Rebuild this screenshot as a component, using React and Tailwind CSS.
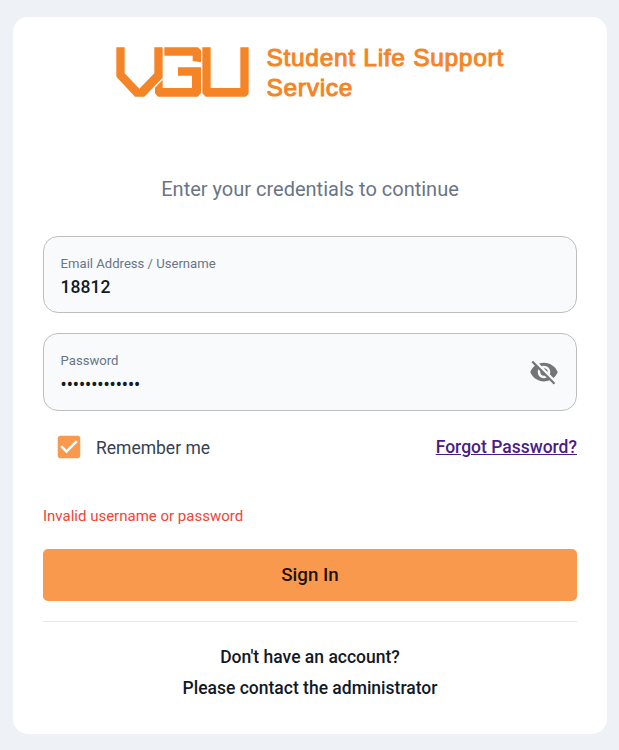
function Logo() {
  return (
    <svg viewBox="33 36 399 150" className="mt-[11px] h-[50px] w-[133px] shrink-0" fill="#f58426">
      <path d="M34 37H59V115L103 161L148 115V37H173V128L118 185H90L34 125Z" />
      <path d="M178 37H279L288 46V82L263 78V62H178Z" />
      <path d="M219 97H288V175L278 185H159L150 175V158L173 134V159H261V122H219Z" />
      <path d="M292 37H317V159H406V37H431V176L422 185H302L292 175Z" />
    </svg>
  );
}

function EyeOff() {
  return (
    <svg viewBox="0 0 24 24" className="h-[30px] w-[30px]" fill="#757575">
      <path d="M12 7c2.76 0 5 2.24 5 5 0 .65-.13 1.26-.36 1.83l2.92 2.92c1.51-1.26 2.7-2.89 3.43-4.75-1.73-4.39-6-7.5-11-7.5-1.4 0-2.74.25-3.98.7l2.16 2.16C10.74 7.13 11.35 7 12 7zM2 4.27l2.28 2.28.46.46C3.08 8.3 1.78 10.02 1 12c1.73 4.39 6 7.5 11 7.5 1.55 0 3.03-.3 4.38-.84l.42.42L19.73 22 21 20.73 3.27 3 2 4.27zM7.53 9.8l1.55 1.55c-.05.21-.08.43-.08.65 0 1.66 1.34 3 3 3 .22 0 .44-.03.65-.08l1.55 1.55c-.67.33-1.41.53-2.2.53-2.76 0-5-2.24-5-5 0-.79.2-1.53.53-2.2zm4.31-.78l3.15 3.15.02-.16c0-1.66-1.34-3-3-3l-.17.01z" />
    </svg>
  );
}

function Field({ label, value, type, children, className, inputClass }) {
  return (
    <div className={`flex items-start justify-between rounded-[15px] border border-[#bdbebf] bg-[#f8fafc] pr-[17px] pl-[16.6px] ${className}`}>
      <label className="block grow pt-[17px]">
        <span className="block text-[13.1px] leading-[20px] text-[#697586]">{label}</span>
        <input
          type={type}
          defaultValue={value}
          className={`block w-full bg-transparent text-[17.5px] font-medium text-[#121926] outline-none ${inputClass}`}
        />
      </label>
      {children}
    </div>
  );
}

export default function App() {
  return (
    <div className="h-[750px] w-full bg-[#eef2f6] px-[13px] pt-[17px] font-[Roboto,sans-serif] pr-[12px]">
      <main className="h-[717px] rounded-[15px] bg-white px-[30px] pt-[19px]">
        <header className="flex h-[124px] pl-[73px]">
          <Logo />
          <h1 className="ml-[17.5px] mt-[7px] whitespace-nowrap font-['Liberation_Sans',sans-serif] text-[24.5px] leading-[30px] tracking-[0.7px] text-[#f58426] [-webkit-text-stroke:1px_#f58426]">
            Student Life Support
            <br />
            Service
          </h1>
        </header>
        <p className="mt-[14px] text-center text-[20px] leading-[30px] text-[#697586]">Enter your credentials to continue</p>
        <Field label="Email Address / Username" value="18812" type="text" className="mt-[32px] h-[77px]" inputClass="h-[26px]" />
        <Field label="Password" value="abcdefghijklm" type="password" className="mt-[20px] h-[78px]" inputClass="h-[28px]">
          <span className="mt-[23px]">
            <EyeOff />
          </span>
        </Field>
        <div className="mt-[21px] flex h-[30px] items-center justify-between">
          <div className="flex items-center pl-[11px]">
            <svg viewBox="0 0 24 24" className="h-[30px] w-[30px]" fill="#f9994d">
              <path d="M19 3H5c-1.11 0-2 .9-2 2v14c0 1.1.89 2 2 2h14c1.11 0 2-.9 2-2V5c0-1.1-.89-2-2-2zm-9 14l-5-5 1.41-1.41L10 14.17l7.59-7.59L19 8l-9 9z" />
            </svg>
            <span className="ml-[12px] pt-[2px] text-[17.5px] leading-[30px] text-[#364152]">Remember me</span>
          </div>
          <a className="text-[17.5px] font-medium text-[#4b1b86] underline">Forgot Password?</a>
        </div>
        <p className="mt-[43px] text-[15px] leading-[22px] text-[#f44336]">Invalid username or password</p>
        <button className="mt-[22px] block h-[52px] w-full rounded-[5px] bg-[#f9994d] text-[18.75px] font-medium text-black/90">Sign In</button>
        <hr className="mt-[20px] border-[#e3e8ef]" />
        <div className="mt-[20px] text-center text-[17.5px] font-medium leading-[31px] text-[#121926]">
          <p>Don't have an account?</p>
          <p>Please contact the administrator</p>
        </div>
      </main>
    </div>
  );
}
